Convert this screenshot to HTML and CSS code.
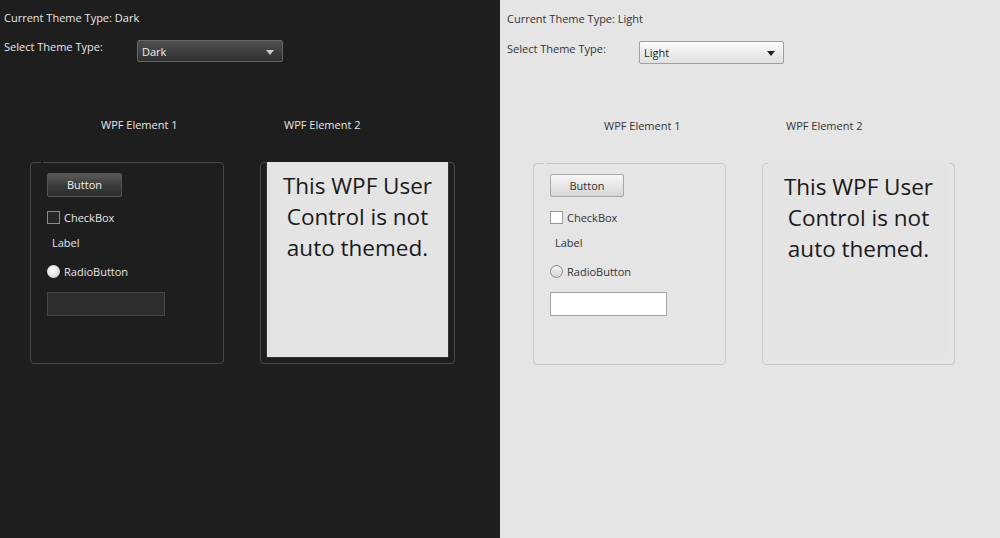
FILE: index.html
```html
<!DOCTYPE html>
<html>
<head>
<meta charset="utf-8">
<link rel="stylesheet" href="styles.css">
</head>
<body>
<div class="app">
  <section class="panel dark">
    <div class="current">Current Theme Type: Dark</div>
    <div class="select-row">
      <span class="select-label">Select Theme Type:</span>
      <div class="combo"><span class="combo-text">Dark</span><span class="arrow"></span></div>
    </div>
    <div class="elements">
      <div class="hdr hdr1">WPF Element 1</div>
      <div class="hdr hdr2">WPF Element 2</div>
      <div class="group group1">
        <div class="btn">Button</div>
        <div class="check"><span class="box"></span><span>CheckBox</span></div>
        <div class="lbl">Label</div>
        <div class="radio"><span class="dot"></span><span>RadioButton</span></div>
        <div class="textbox"></div>
      </div>
      <div class="group group2">
        <div class="usercontrol">This WPF User Control is not auto themed.</div>
      </div>
    </div>
  </section>
  <section class="panel light">
    <div class="current">Current Theme Type: Light</div>
    <div class="select-row">
      <span class="select-label">Select Theme Type:</span>
      <div class="combo"><span class="combo-text">Light</span><span class="arrow"></span></div>
    </div>
    <div class="elements">
      <div class="hdr hdr1">WPF Element 1</div>
      <div class="hdr hdr2">WPF Element 2</div>
      <div class="group group1">
        <div class="btn">Button</div>
        <div class="check"><span class="box"></span><span>CheckBox</span></div>
        <div class="lbl">Label</div>
        <div class="radio"><span class="dot"></span><span>RadioButton</span></div>
        <div class="textbox"></div>
      </div>
      <div class="group group2">
        <div class="usercontrol">This WPF User Control is not auto themed.</div>
      </div>
    </div>
  </section>
</div>
</body>
</html>
```
FILE: styles.css
```css
* { box-sizing: border-box; }
html, body { margin: 0; padding: 0; }
body {
  width: 1000px;
  height: 538px;
  overflow: hidden;
  font-family: "Open Sans", "Noto Sans", "DejaVu Sans", sans-serif;
  font-size: 11px;
  line-height: 16px;
}
.app {
  display: flex;
  width: 1000px;
  height: 538px;
}
.panel {
  width: 500px;
  height: 538px;
  padding: 10px 0 0 4px;
  display: flex;
  flex-direction: column;
}
.panel.light {
  padding: 11px 0 0 7px;
}
.dark { background: #1e1e1e; color: #e6e6e6; }
.light { background: #e5e5e5; color: #333; }

.current { height: 16px; }

.select-row {
  display: flex;
  align-items: flex-start;
  margin-top: 14px;
}
.select-label {
  width: 133px;
  margin-top: -1px;
}
.light .select-label {
  width: 132px;
  margin-top: 0;
}
.combo {
  width: 146px;
  height: 22px;
  border-radius: 2px;
  display: flex;
  align-items: center;
  justify-content: space-between;
  padding: 1px 8px 0 4px;
}
.light .combo { height: 23px; width: 145px; padding-left: 4px; }
.dark .combo {
  background: linear-gradient(#505050, #2f2f2f);
  border: 1px solid #666;
  color: #f0f0f0;
}
.light .combo {
  background: linear-gradient(#fbfbfb, #e0e0e0);
  border: 1px solid #a0a0a0;
  color: #1e1e1e;
}
.arrow {
  width: 0;
  height: 0;
  border-left: 4px solid transparent;
  border-right: 4px solid transparent;
  border-top: 5px solid #c8c8c8;
  margin-top: 1px;
}
.light .arrow { border-top-color: #222; }

.elements {
  display: grid;
  grid-template-columns: 194px 195px;
  column-gap: 36px;
  row-gap: 29px;
  margin-top: 55px;
  margin-left: 26px;
}
.light .elements {
  grid-template-columns: 193px 193px;
  column-gap: 36px;
  margin-top: 54px;
}
.hdr { line-height: 16px; }
.hdr1 { margin-left: 71px; }
.hdr2 { margin-left: 24px; }

.group {
  position: relative;
  height: 202px;
  border-radius: 4px;
  display: flex;
  flex-direction: column;
  align-items: flex-start;
  padding: 10px 0 0 16px;
}
.dark .group { border: 1px solid #474747; }
.light .group { border: 1px solid #c9c9c9; }
.group1::before {
  content: "";
  position: absolute;
  top: -1px;
  left: 10px;
  width: 2px;
  height: 1px;
}
.dark .group1::before { background: #1e1e1e; }
.light .group1::before { background: #e5e5e5; }

.btn {
  width: 75px;
  height: 24px;
  border-radius: 2px;
  display: flex;
  align-items: center;
  justify-content: center;
}
.dark .btn {
  background: linear-gradient(#5a5a5a, #3a3a3a 55%, #2b2b2b);
  border: 1px solid #555;
  color: #f2f2f2;
}
.light .btn {
  width: 74px;
  height: 23px;
  background: linear-gradient(#f8f8f8, #e6e6e6 50%, #d6d6d6);
  border: 1px solid #a8a8a8;
  color: #333;
}

.check, .radio {
  display: flex;
  align-items: center;
  height: 13px;
  gap: 4px;
}
.check { margin-top: 14px; }
.box {
  width: 13px;
  height: 13px;
}
.dark .box { border: 1px solid #8a8a8a; background: #262626; }
.light .box { border: 1px solid #9a9a9a; background: #fff; }

.lbl {
  margin-top: 11px;
  margin-left: 5px;
}
.radio { margin-top: 14px; }
.dot {
  width: 13px;
  height: 13px;
  border-radius: 50%;
}
.dark .dot { background: radial-gradient(circle at 45% 40%, #ffffff, #e0e0e0 55%, #b8b8b8); }
.light .dot { border: 1px solid #8a8a8a; background: linear-gradient(#f4f4f4, #d4d4d4); }

.textbox {
  margin-top: 14px;
  width: 118px;
  height: 24px;
}
.dark .textbox { background: #2e2e2e; border: 1px solid #454545; }
.light .textbox { width: 117px; background: #fff; border: 1px solid #a5a5a5; }

.group2 {
  padding: 0 5px 5px 5px;
  align-items: stretch;
}
.usercontrol {
  flex: 1;
  background: #e4e4e4;
  color: #1a1a1a;
  font-size: 22.5px;
  line-height: 31px;
  text-align: center;
  padding: 8px 4px 0;
  border: 1px solid #333;
  border-top: none;
  margin-top: -1px;
}
.light .usercontrol { border-color: #e5e5e5; }
```
